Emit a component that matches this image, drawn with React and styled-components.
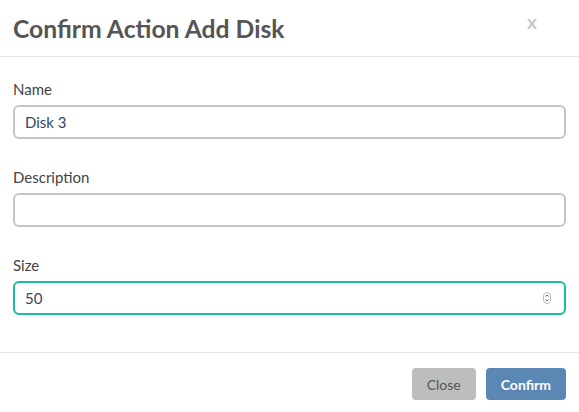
import React from "react";
import styled, { createGlobalStyle } from "styled-components";

const GlobalStyle = createGlobalStyle`
  body {
    margin: 0;
    background: #fff;
    font-family: Lato, "Open Sans", sans-serif;
  }
`;

const Modal = styled.div`
  width: 579px;
  height: 412px;
  background: #fff;
  display: flex;
  flex-direction: column;
`;

const Header = styled.div`
  height: 56px;
  border-bottom: 1px solid #e5e5e5;
  display: flex;
  align-items: center;
  justify-content: space-between;
  padding: 0 42px 0 13px;
`;

const Title = styled.h4`
  margin: 0;
  font-size: 24.7px;
  font-weight: 700;
  color: #555;
`;

const CloseX = styled.button`
  border: none;
  background: none;
  padding: 0;
  margin-top: -13px;
  font-family: Lato, sans-serif;
  font-size: 19px;
  font-weight: 700;
  color: #c8c8c8;
  cursor: pointer;
`;

const Body = styled.div`
  padding: 22px 13px 0;
  height: 273px;
  border-bottom: 1px solid #e5e5e5;
  display: flex;
  flex-direction: column;
  gap: 28px;
`;

const Field = styled.div`
  display: flex;
  flex-direction: column;
`;

const Label = styled.label`
  font-size: 15px;
  color: #444;
  line-height: 20px;
  margin-bottom: 6px;
`;

const InputWrap = styled.div`
  position: relative;
`;

const Input = styled.input`
  box-sizing: border-box;
  width: 100%;
  height: 34px;
  border: 2px solid ${(p) => (p.$focused ? "#1abc9c" : "#c4c4c4")};
  border-radius: 6px;
  padding: 0 10px;
  font-family: Lato, sans-serif;
  font-size: 15px;
  color: #34495e;
  outline: none;
  caret-color: #34495e;
  -moz-appearance: textfield;

  &::-webkit-inner-spin-button,
  &::-webkit-outer-spin-button {
    -webkit-appearance: none;
    margin: 0;
  }
`;

const Spinner = styled.svg`
  position: absolute;
  right: 15px;
  top: 11px;
  pointer-events: none;
`;

const Footer = styled.div`
  flex: 1;
  display: flex;
  justify-content: flex-end;
  align-items: flex-start;
  gap: 10px;
  padding: 15px 13px 0;
`;

const Button = styled.button`
  height: 32px;
  padding: 0 15px;
  border: none;
  border-radius: 4px;
  font-family: Lato, sans-serif;
  font-size: 14px;
  font-weight: ${(p) => (p.$primary ? 700 : 400)};
  color: ${(p) => (p.$primary ? "#fff" : "#555")};
  background: ${(p) => (p.$primary ? "#5b87b4" : "#bdbdbd")};
  cursor: pointer;
`;

export default function App() {
  return (
    <>
      <GlobalStyle />
      <Modal>
        <Header>
          <Title>Confirm Action Add Disk</Title>
          <CloseX>x</CloseX>
        </Header>
        <Body>
          <Field>
            <Label>Name</Label>
            <Input defaultValue="Disk 3" />
          </Field>
          <Field>
            <Label>Description</Label>
            <Input defaultValue="" />
          </Field>
          <Field>
            <Label>Size</Label>
            <InputWrap>
              <Input type="number" defaultValue="50" $focused autoFocus />
              <Spinner width="8" height="12" viewBox="0 0 8 12">
                <rect x="0.5" y="0.5" width="7" height="11" rx="3.5" fill="#fff" stroke="#bbb" />
                <path d="M2.5 4.5 L4 3 L5.5 4.5 M2.5 7.5 L4 9 L5.5 7.5" fill="none" stroke="#555" strokeWidth="0.9" />
              </Spinner>
            </InputWrap>
          </Field>
        </Body>
        <Footer>
          <Button>Close</Button>
          <Button $primary>Confirm</Button>
        </Footer>
      </Modal>
    </>
  );
}
